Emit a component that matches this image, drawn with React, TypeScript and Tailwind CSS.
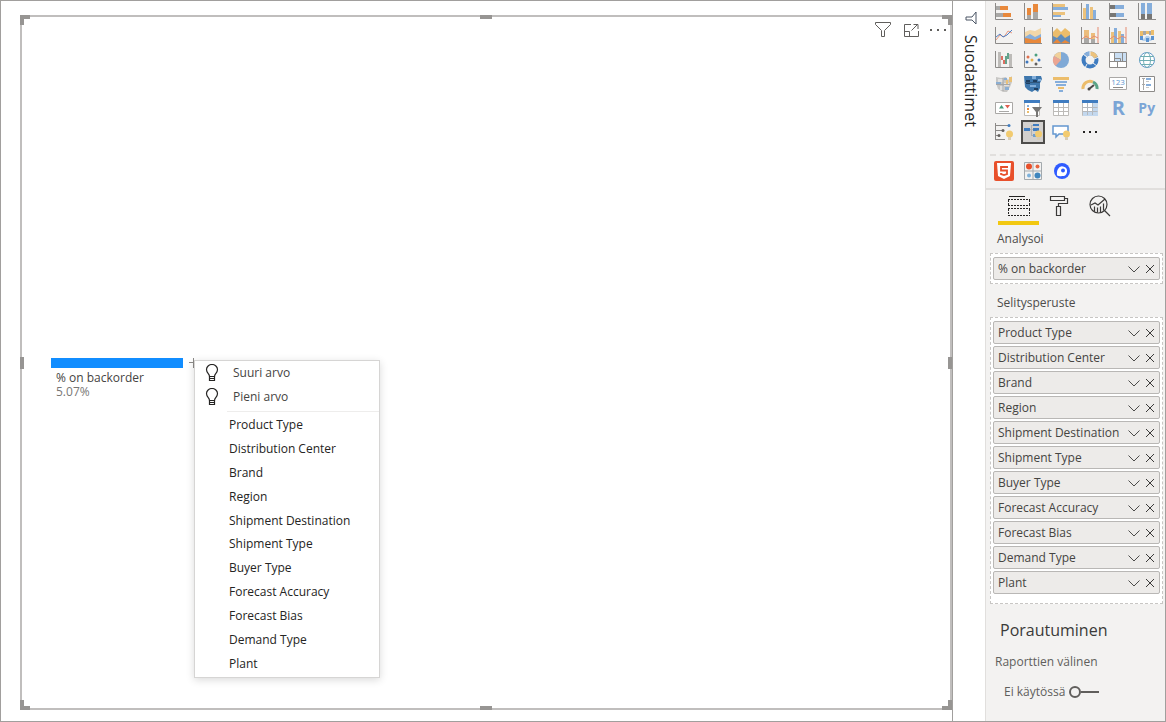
import React from "react";

const Icon = ({ children }: { children: React.ReactNode }) => (
  <svg viewBox="0 0 18 18" className="size-[18px] shrink-0" fill="none" aria-hidden="true">
    {children}
  </svg>
);

const Axis = () => <path d="M.5 0v16.5H18" stroke="#8c8a88" />;

const Bulb = () => (
  <>
    <circle cx="14.5" cy="11" r="3.5" fill="#f2cb70" />
    <path d="M13 14h3v3h-3z" fill="#d8cdb5" />
  </>
);

const visuals = [
  {
    name: "Stacked bar chart",
    icon: (
      <Icon>
        <path d="M1 3h4v4H1zM1 10h7v4H1z" fill="#a9a8a6" />
        <path d="M5 3h8v4H5zM8 10h8v4H8z" fill="#e8883b" />
        <Axis />
      </Icon>
    ),
  },
  {
    name: "Stacked column chart",
    icon: (
      <Icon>
        <path d="M3 12h4v4H3zM9 9h5v7H9z" fill="#a9a8a6" />
        <path d="M3 5h4v7H3zM9 1h5v8H9z" fill="#e8883b" />
        <Axis />
      </Icon>
    ),
  },
  {
    name: "Clustered bar chart",
    icon: (
      <Icon>
        <path d="M1 1h12v3H1zM1 9h12v3H1z" fill="#ecc27c" />
        <path d="M1 4h15v3H1zM1 12h8v2H1z" fill="#86aedb" />
        <Axis />
      </Icon>
    ),
  },
  {
    name: "Clustered column chart",
    icon: (
      <Icon>
        <path d="M2 5h3v11H2zM9 4h3v12H9z" fill="#ecc27c" />
        <path d="M5 1h3v15H5zM12 7h3v9h-3z" fill="#86aedb" />
        <Axis />
      </Icon>
    ),
  },
  {
    name: "100% stacked bar chart",
    icon: (
      <Icon>
        <path d="M1 2h5v4H1zM1 10h6v4H1z" fill="#777674" />
        <path d="M6 2h9v4H6zM7 10h8v4H7z" fill="#86aedb" />
        <Axis />
      </Icon>
    ),
  },
  {
    name: "100% stacked column chart",
    icon: (
      <Icon>
        <path d="M3 11h4v5H3zM9 11h5v5H9z" fill="#777674" />
        <path d="M3 0h4v11H3zM9 0h5v11H9z" fill="#86aedb" />
        <Axis />
      </Icon>
    ),
  },
  {
    name: "Line chart",
    icon: (
      <Icon>
        <path d="M1 13l4-5 4 2 4-6 4 2" stroke="#e99a82" />
        <path d="M1 10l4-3 3 3 4-2 5-5" stroke="#4f7fc4" />
        <Axis />
      </Icon>
    ),
  },
  {
    name: "Area chart",
    icon: (
      <Icon>
        <path d="M1 5l5-2 5 1 6-3v15H1z" fill="#f2d7a8" />
        <path d="M1 10l5-3 5 3 6-3v9H1z" fill="#86aedb" />
        <path d="M1 11l6 1 4 1 6-3v6H1z" fill="#e8883b" />
        <Axis />
      </Icon>
    ),
  },
  {
    name: "Stacked area chart",
    icon: (
      <Icon>
        <path d="M1 5l4-4 4 4 4-4 5 4v11H1z" fill="#ecbd6b" />
        <path d="M1 9l4 2 4-4 4 4 5-3v8H1z" fill="#5f8cbb" />
        <path d="M1 16l4-4 4 4 4-3 5 3z" fill="#e8883b" />
        <Axis />
      </Icon>
    ),
  },
  {
    name: "Line and stacked column chart",
    icon: (
      <Icon>
        <path d="M3 3h5v8H3zM10 6h4v6h-4z" fill="#ecbd7c" />
        <path d="M3 11h5v5H3zM10 12h4v4h-4z" fill="#a9a8a6" />
        <path d="M1 12l4-3 4 3 4-3 4 2M17 0v16" stroke="#e58b70" />
        <Axis />
      </Icon>
    ),
  },
  {
    name: "Line and clustered column chart",
    icon: (
      <Icon>
        <path d="M2 5h3v11H2zM9 4h3v12H9z" fill="#ecc27c" />
        <path d="M5 1h3v15H5zM12 7h3v9h-3z" fill="#86aedb" />
        <path d="M1 12l4-3 4 3 4-3 4 2M17 0v16" stroke="#e58b70" />
        <Axis />
      </Icon>
    ),
  },
  {
    name: "Ribbon chart",
    icon: (
      <Icon>
        <path d="M2 4h3v5H2zM8 4h3v3H8zM13 3h3v5h-3z" fill="#ecbd6b" />
        <path d="M5 4h3v4H5zM11 4h2v4h-2z" fill="#a9a8a6" />
        <path d="M2 9l4 3 2-3h3l2 3 3-4v3l-3 3H5l-3-2z" fill="#b7d2ec" />
        <path d="M2 9h3v4H2zM8 11h3v4H8zM13 9h3v4h-3z" fill="#5b93d1" />
        <Axis />
      </Icon>
    ),
  },
  {
    name: "Waterfall chart",
    icon: (
      <Icon>
        <path d="M3 1h3v15H3zM14 3h3v13h-3z" fill="#bdbbb8" />
        <path d="M6 5h2v4H6zM8 9h2v4H8z" fill="#dc6f62" />
        <path d="M10 5h2v8h-2zM12 2h2v6h-2z" fill="#63a38c" />
        <Axis />
      </Icon>
    ),
  },
  {
    name: "Scatter chart",
    icon: (
      <Icon>
        <circle cx="4" cy="6" r="1.5" fill="#df704e" />
        <circle cx="12" cy="4" r="1.5" fill="#4b9f80" />
        <circle cx="3" cy="11" r="1.5" fill="#3f77bd" />
        <circle cx="8" cy="9" r="1.5" fill="#e7b14e" />
        <circle cx="15" cy="9" r="1.5" fill="#3f77bd" />
        <circle cx="12" cy="13" r="1.5" fill="#625f5c" />
        <Axis />
      </Icon>
    ),
  },
  {
    name: "Pie chart",
    icon: (
      <Icon>
        <circle cx="9" cy="9" r="8" fill="#7fa9d6" />
        <path d="M9 9V1a8 8 0 0 0-7 4z" fill="#f1d09a" />
        <path d="M9 9L2 5a8 8 0 0 0 1.500 10z" fill="#eba592" />
      </Icon>
    ),
  },
  {
    name: "Donut chart",
    icon: (
      <Icon>
        <circle cx="9" cy="9" r="6.500" stroke="#3f7cc0" strokeWidth="4" />
        <path d="M9 2.500a6.500 6.500 0 0 1 6 4" stroke="#ecc27c" strokeWidth="4" />
        <path d="M4 5a6.500 6.500 0 0 1 5-2.500" stroke="#86aedb" strokeWidth="4" />
        <path d="M9 0v5M18 6l-5 2M2 3l4 3M4 17l2-4M16 15l-4-3" stroke="#f3f2f1" />
      </Icon>
    ),
  },
  {
    name: "Treemap",
    icon: (
      <Icon>
        <path d="M1 1h16v16H1z" fill="#fff" />
        <path d="M6 1h11v9H6z" fill="#c9def3" />
        <path d="M.5 1.500h17v15H.5zM5.500 1.500v9M.5 10.500h17M8.500 10.500v6M5.500 7.500h6M11.500 7.500v3M13.500 1.500v9" stroke="#8c8a88" />
      </Icon>
    ),
  },
  {
    name: "Map",
    icon: (
      <Icon>
        <circle cx="9" cy="9" r="7.500" stroke="#5f97c9" fill="#fff" />
        <ellipse cx="9" cy="9" rx="3.500" ry="7.500" stroke="#74aeb9" />
        <path d="M2 5.500h14M1 9.500h16M3 13.500h12" stroke="#6faeb2" />
      </Icon>
    ),
  },
  {
    name: "Filled map",
    icon: (
      <Icon>
        <path d="M1 2l5 1 5-1 2 3 4-4v6l-2 5-3 5H8l-5-3-2-6z" fill="#c8c7c5" />
        <path d="M3 4h5v3H3zM9 8h5v3H9zM5 11h4v4H5z" fill="#e2e1df" />
        <path d="M14 2h3v5h-3zM11 5h2v4h-2z" fill="#eac178" />
        <path d="M1 7h5v2H1zM9 3h3v2H9zM10 12h4v3h-4z" fill="#8baed2" />
        <path d="M1 9.500h14M8 3v13" stroke="#a5a6a8" />
      </Icon>
    ),
  },
  {
    name: "Shape map",
    icon: (
      <Icon>
        <path d="M0 1h17l1 3-2 4v5l-2 4-3-2-3 2-4-2-3-3z" fill="#3e77ad" />
        <path d="M2 5h4v4H2zM9 5h4v3H9zM10 13h4v2h-4z" fill="#1f3f60" />
        <path d="M8 1h4v3H8zM14 4h3v2h-3zM6 10h6v2H6z" fill="#82aeda" />
        <path d="M1 7.500h15" stroke="#30587f" />
      </Icon>
    ),
  },
  {
    name: "Funnel",
    icon: (
      <Icon>
        <path d="M1 2h16v3H1z" fill="#ecbd6b" />
        <path d="M3 6h12v2H3zM4 9h10v2H4z" fill="#86aedb" />
        <path d="M6 12h6v2H6z" fill="#ecbd6b" />
        <path d="M7 15h4v2H7z" fill="#86aedb" />
      </Icon>
    ),
  },
  {
    name: "Gauge",
    icon: (
      <Icon>
        <path d="M2 14a7 7 0 0 1 10-7" stroke="#ecbd6b" strokeWidth="3" />
        <path d="M12 7a7 7 0 0 1 4 7" stroke="#5aa386" strokeWidth="3" />
        <path d="M8 14l5-4" stroke="#4a4846" strokeWidth="2" />
        <circle cx="8" cy="14" r="1.500" fill="#4a4846" />
      </Icon>
    ),
  },
  {
    name: "Card",
    icon: (
      <Icon>
        <path d="M.5 2.500h17v12H.5z" stroke="#aaa8a6" fill="#fff" />
        <text x="9" y="10" textAnchor="middle" fontSize="8" fill="#5f96ce">123</text>
        <path d="M4 12.500h10" stroke="#8c8a88" />
      </Icon>
    ),
  },
  {
    name: "Multi-row card",
    icon: (
      <Icon>
        <path d="M1.500 1.500h15v15h-15z" stroke="#8c8a88" fill="#fff" />
        <path d="M5.500 3v12M4 3.500h3M4 9.500h3" stroke="#a9a8a6" />
        <path d="M8 4h5M8 10h5" stroke="#86aedb" strokeWidth="2" />
        <path d="M8 6.500h3M8 12.500h3" stroke="#c8c6c4" />
      </Icon>
    ),
  },
  {
    name: "KPI",
    icon: (
      <Icon>
        <path d="M.5 3.500h17v11H.5z" stroke="#aaa8a6" fill="#fff" />
        <path d="M4 9.500l2.500-3.500L9 9.500z" fill="#439b7b" />
        <path d="M10 6h5l-2.500 3.500z" fill="#df604f" />
        <path d="M4 12.500h10" stroke="#a9a8a6" />
      </Icon>
    ),
  },
  {
    name: "Slicer",
    icon: (
      <Icon>
        <path d="M.5 1.500h15v15H.5z" stroke="#bdbbb8" fill="#fff" />
        <path d="M0 1h16v3H0z" fill="#3f7cc0" />
        <path d="M3 6h2v2H3z" fill="#86aedb" />
        <path d="M3 9h2v2H3z" fill="#e8883b" />
        <path d="M3 12h2v2H3z" fill="#ecbd6b" />
        <path d="M8 8h10l-4 5v5h-2v-5z" fill="#777674" />
      </Icon>
    ),
  },
  {
    name: "Table",
    icon: (
      <Icon>
        <path d="M1.500 1.500h15v15h-15z" stroke="#bdbbb8" fill="#fff" />
        <path d="M1.500 8.500h15M1.500 12.500h15M6.500 4v12M11.500 4v12" stroke="#bdbbb8" />
        <path d="M1 1h16v3H1z" fill="#3f7cc0" />
      </Icon>
    ),
  },
  {
    name: "Matrix",
    icon: (
      <Icon>
        <path d="M1.500 1.500h15v15h-15z" stroke="#bdbbb8" fill="#fff" />
        <path d="M12 4h5v13h-5zM2 13h15v4H2z" fill="#c3d8ee" />
        <path d="M1.500 8.500h15M1.500 12.500h15M6.500 4v12M11.500 4v12" stroke="#b5b9bd" />
        <path d="M1 1h16v3H1z" fill="#3f7cc0" />
      </Icon>
    ),
  },
  { name: "R script visual", icon: <span className="text-xl font-bold text-[#7ba5d6]">R</span> },
  { name: "Python visual", icon: <span className="text-sm font-bold text-[#7ba5d6]">Py</span> },
  {
    name: "Key influencers",
    icon: (
      <Icon>
        <path d="M.5 0v17M1 2.500h13M1 7.500h8M1 12.500h4M1 16.500h9" stroke="#8c8a88" />
        <circle cx="14" cy="2.500" r="1.500" fill="#3f7cc0" />
        <circle cx="8" cy="7.500" r="1.500" fill="#625f5c" />
        <circle cx="4" cy="12.500" r="1.500" fill="#625f5c" />
        <Bulb />
      </Icon>
    ),
  },
  {
    name: "Decomposition tree",
    icon: (
      <Icon>
        <path d="M6 6.500h3M7.500 2v11M8 2.500h2M7 12.500h3" stroke="#b3b1af" />
        <path d="M0 5h6v3H0zM9 1h6v2H9zM9 5h6v3H9z" fill="#3f7cc0" />
        <path d="M9 11h3v3H9z" fill="#6f9fd0" />
        <Bulb />
      </Icon>
    ),
  },
  {
    name: "Q&A",
    icon: (
      <Icon>
        <path d="M1 3h15v8H7l-3 3v-3H1z" stroke="#6397d0" strokeWidth="1.500" fill="#fff" />
        <Bulb />
      </Icon>
    ),
  },
  {
    name: "More visuals",
    icon: (
      <Icon>
        <path d="M2 8h2v2H2zM8 8h2v2H8zM14 8h2v2h-2z" fill="#252423" />
      </Icon>
    ),
  },
];

const fields = [
  "Product Type",
  "Distribution Center",
  "Brand",
  "Region",
  "Shipment Destination",
  "Shipment Type",
  "Buyer Type",
  "Forecast Accuracy",
  "Forecast Bias",
  "Demand Type",
  "Plant",
];

const Field = ({ name }: { name: string }) => (
  <li className="flex h-[23px] items-center border border-[#b9b7b5] bg-[#edebe9] px-1 text-[#454442] rounded-xs">
    <span className="flex-1 whitespace-nowrap">{name}</span>
    <button type="button" aria-label={`${name} options`}>
      <svg viewBox="0 0 14 12" className="h-3 w-3.5" fill="none" stroke="#4d4c4a">
        <path d="M1.500 3.500L7 9l5.500-5.500" />
      </svg>
    </button>
    <button type="button" className="ml-1" aria-label={`Remove ${name}`}>
      <svg viewBox="0 0 10 12" className="h-3 w-2.5" fill="none" stroke="#3b3a39">
        <path d="M1 2l8 8M9 2l-8 8" />
      </svg>
    </button>
  </li>
);

const VisualMenu = () => (
  <div className="absolute left-[143px] top-[34px] w-[186px] border border-[#d6d5d4] bg-white shadow-[0_2px_8px_rgba(0,0,0,0.15)]">
    {["Suuri arvo", "Pieni arvo"].map((label) => (
      <button key={label} type="button" className="flex h-6 w-full items-center pl-2.5 text-[#454442]">
        <svg viewBox="0 0 14 18" className="mr-3.5 h-[18px] w-3.5" fill="none" stroke="#252423">
          <path d="M4.500 12.500c0-3-3-3.500-3-7a5.500 5 0 0 1 11 0c0 3.500-3 4-3 7z" strokeWidth="1.200" />
          <path d="M4.500 12.500v4h5v-4M4.500 14.500h5" strokeWidth="1.200" />
        </svg>
        {label}
      </button>
    ))}
    <hr className="ml-8 mt-0.5 border-[#eeedec]" />
    <ul className="grid h-[265px] auto-rows-fr pb-px pt-0.5 text-[#252423]">
      {fields.map((field) => (
        <li key={field} className="flex">
          <button type="button" className="w-full pl-[34px] text-left">
            {field}
          </button>
        </li>
      ))}
    </ul>
  </div>
);

// Grips on the corners and edges of the selected visual
const Handles = () => (
  <>
    <span className="absolute -left-0.5 -top-0.5 size-2.5 border-l-4 border-t-4 border-[#979593]" />
    <span className="absolute -right-0.5 -top-0.5 size-2.5 border-r-4 border-t-4 border-[#979593]" />
    <span className="absolute -bottom-0.5 -left-0.5 size-2.5 border-b-4 border-l-4 border-[#979593]" />
    <span className="absolute -bottom-0.5 -right-0.5 size-2.5 border-b-4 border-r-4 border-[#979593]" />
    <span className="absolute -top-0.5 left-1/2 h-1 w-3 -translate-x-1/2 bg-[#979593]" />
    <span className="absolute -bottom-0.5 left-1/2 h-1 w-3 -translate-x-1/2 bg-[#979593]" />
    <span className="absolute -left-0.5 top-1/2 h-3 w-1 -translate-y-1/2 bg-[#979593]" />
    <span className="absolute -right-0.5 top-1/2 h-3 w-1 -translate-y-1/2 bg-[#979593]" />
  </>
);

const Canvas = () => (
  <main className="flex min-w-0 flex-1 pb-3 pl-5 pt-[15px]">
    <section className="relative flex flex-1 items-center border-2 border-[#c0bebd]">
      <Handles />
      <div className="absolute right-1 top-1 flex gap-2.5">
        <button type="button" aria-label="Filters">
          <svg viewBox="0 0 18 18" className="size-[18px]" fill="none" stroke="#605e5c">
            <path d="M1.500 1.500h15v2l-6 6v6h-3v-6l-6-6z" />
          </svg>
        </button>
        <button type="button" aria-label="Focus mode">
          <svg viewBox="0 0 18 18" className="size-[18px]" fill="none" stroke="#605e5c">
            <path d="M9 3.500H2.500v12h14V10M2.500 10.500h5v5M9.500 9.500l6-6M11.500 3.500h4.500V8" />
          </svg>
        </button>
        <button type="button" aria-label="More options">
          <svg viewBox="0 0 16 18" className="h-[18px] w-4" fill="#605e5c">
            <path d="M0 8h2v2H0zM7 8h2v2H7zM14 8h2v2h-2z" />
          </svg>
        </button>
      </div>
      <div className="relative ml-[29px] h-[74px] pt-8">
        <div className="flex items-center">
          <div className="h-2.5 w-[132px] bg-[#118dff]" />
          <svg viewBox="0 0 8 10" className="ml-1.5 h-2.5 w-2" stroke="#8c8a88">
            <path d="M0 4.500h8M4.500 0v10" />
          </svg>
        </div>
        <div className="pl-[5px] pt-[3px] text-xs leading-[14px]">
          <p className="text-[#454442]">% on backorder</p>
          <p className="text-[#797775]">5.07%</p>
        </div>
        <VisualMenu />
      </div>
    </section>
  </main>
);

const FiltersPane = () => (
  <aside className="flex w-[34px] flex-col items-center border-l border-r border-l-[#a19f9d] border-r-[#e1dfdd] pl-1 pt-[11px]">
    <button type="button" aria-label="Expand filters">
      <svg viewBox="0 0 12 14" className="h-3.5 w-3" fill="none" stroke="#4a5565">
        <path d="M11 1v12L7 9H1V6h6z" />
      </svg>
    </button>
    <h2 className="mt-2.5 text-base leading-5 font-medium text-[#252423] [writing-mode:vertical-rl]">
      Suodattimet
    </h2>
  </aside>
);

const VisualizationsPane = () => (
  <aside className="w-[180px] bg-[#f3f2f1]">
    <div className="grid grid-cols-6 pl-1 pr-[5px]">
      {visuals.map(({ name, icon }) => (
        <button
          key={name}
          type="button"
          aria-label={name}
          className={
            name === "Decomposition tree"
              ? "flex size-6 items-center justify-center justify-self-center border-2 border-[#4d4c4a] bg-[#d2d0ce]"
              : "flex h-6 items-center justify-center"
          }
        >
          {icon}
        </button>
      ))}
    </div>
    <div className="mx-1 mt-2.5 border-t-2 border-dashed border-[#e1dfdd]" />
    <div className="flex gap-[9px] pb-1.5 pl-2 pt-1">
      <button type="button" aria-label="HTML content">
        <svg viewBox="0 0 20 22" className="h-[22px] w-5" fill="none">
          <rect y="1" width="20" height="20" rx="2" fill="#e8502b" />
          <path d="M3 3h14l-1 13-6 3-6-3z" fill="#fff" />
          <path d="M14 7H7v3.500h6V14l-3 1-3-1v-1" stroke="#e8502b" strokeWidth="1.800" />
        </svg>
      </button>
      <button type="button" aria-label="Dot matrix">
        <svg viewBox="0 0 20 22" className="h-[22px] w-5" fill="none">
          <path d="M1.500 2.500h17v17h-17zM10 2v18M1 11h18" stroke="#a3a9ad" />
          <circle cx="6" cy="6.500" r="3" fill="#e8502b" />
          <circle cx="14.500" cy="6.500" r="2" fill="#e8653f" />
          <circle cx="6" cy="15.500" r="2" fill="#7eb2dc" />
          <circle cx="14.500" cy="15.500" r="3" fill="#3f85bd" />
        </svg>
      </button>
      <button type="button" aria-label="Mapbox">
        <svg viewBox="0 0 20 22" className="h-[22px] w-5" fill="none">
          <circle cx="10" cy="11" r="8" fill="#2f5bff" />
          <path d="M5 15.500c0-2-.5-4 1-6.500a4.800 4.800 0 1 1 4 7c-2 .5-3.500 0-5-.5z" fill="#fff" />
          <circle cx="11" cy="10.500" r="2" fill="#2f5bff" />
        </svg>
      </button>
    </div>
    <div className="flex border-t-2 border-[#e1dfdd] pl-3">
      <button type="button" aria-label="Fields" className="flex h-[35px] w-[41px] items-center justify-center border-b-4 border-[#f2c811] pt-px">
        <svg viewBox="0 0 22 22" className="size-[22px]" fill="none" stroke="#252423">
          <path d="M1 1.500h16" />
          <path d="M0 4.500h22M0 10.500h22M0 13.500h22M0 20.500h22M.5 5v6M21.500 5v6M.5 14v6M21.500 14v6" strokeDasharray="2 1" />
        </svg>
      </button>
      <button type="button" aria-label="Format" className="flex h-[35px] w-10 items-center justify-center border-b-4 border-transparent pt-px">
        <svg viewBox="0 0 20 22" className="h-[22px] w-5" fill="none" stroke="#3b3a39" strokeWidth="1.200">
          <path d="M1.500 1.500h14v4h-14zM15.500 3.500h3v5h-9v3M7.500 11.500h4v9h-4z" />
        </svg>
      </button>
      <button type="button" aria-label="Analytics" className="flex h-[35px] w-[41px] items-center justify-center border-b-4 border-transparent pt-px">
        <svg viewBox="0 0 22 22" className="size-[22px]" fill="none" stroke="#3b3a39" strokeWidth="1.200">
          <circle cx="9.500" cy="9.500" r="8.500" />
          <path d="M15.500 15.500l5.500 5.500M2 10l4-2 3 2 7-6M5.500 11.500v5M8.500 12.500v5M11.500 11.500v6M14.500 8.500v7" />
        </svg>
      </button>
    </div>
    <section>
      <h3 className="ml-[11px] mt-0.5 h-6 leading-6 text-[#4d4c4a]">Analysoi</h3>
      <ul className="ml-1 mr-[3px] mt-0.5 border border-dashed border-[#c8c6c4] bg-white px-0.5 py-[3px]">
        <Field name="% on backorder" />
      </ul>
    </section>
    <section>
      <h3 className="ml-[11px] mt-[7px] h-6 leading-6 text-[#4d4c4a]">Selitysperuste</h3>
      <ul className="ml-1 mr-[3px] mt-0.5 flex flex-col gap-0.5 border border-dashed border-[#c8c6c4] bg-white px-0.5 pb-[9px] pt-[3px]">
        {fields.map((field) => (
          <Field key={field} name={field} />
        ))}
      </ul>
    </section>
    <section className="text-[#605e5c]">
      <h2 className="ml-3.5 mt-3.5 text-base leading-6 text-[#3b3a39]">Porautuminen</h2>
      <h3 className="ml-[9px] mt-2 leading-6">Raporttien välinen</h3>
      <label className="ml-[18px] mt-1.5 flex items-center gap-1 leading-6 whitespace-nowrap">
        Ei käytössä
        <input
          type="checkbox"
          role="switch"
          className="flex h-3 w-[30px] appearance-none items-center before:size-3 before:rounded-full before:border-2 before:border-[#605e5c] before:content-[''] after:h-0.5 after:flex-1 after:bg-[#605e5c] after:content-['']"
        />
      </label>
    </section>
  </aside>
);

export default function App() {
  return (
    <div className="relative flex min-h-screen bg-white font-['Open_Sans','Noto_Sans',sans-serif] text-xs">
      <Canvas />
      <FiltersPane />
      <VisualizationsPane />
      <div className="pointer-events-none absolute inset-0 border border-[#a19f9d]" />
    </div>
  );
}
